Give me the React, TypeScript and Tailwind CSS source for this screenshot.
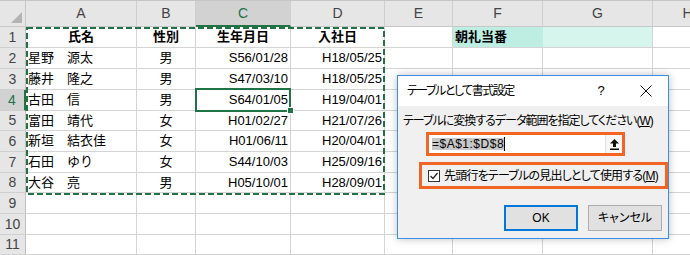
import clsx from "clsx";

const cols = [
  { label: "A", w: "w-[111px]" },
  { label: "B", w: "w-[59px]" },
  { label: "C", w: "w-[95px]" },
  { label: "D", w: "w-[94px]" },
  { label: "E", w: "w-[68px]" },
  { label: "F", w: "w-[90px]" },
  { label: "G", w: "w-[110px]" },
  { label: "H", w: "w-[70px]" },
];

const rowHeights = ["h-[21px]", "h-[21px]", "h-[21px]", "h-[21px]", "h-[20px]", "h-[21px]", "h-[21px]", "h-[20px]", "h-[21px]", "h-[21px]", "h-[20px]"];

const people = [
  ["星野　源太", "男", "S56/01/28", "H18/05/25"],
  ["藤井　隆之", "男", "S47/03/10", "H18/05/25"],
  ["古田　信", "男", "S64/01/05", "H19/04/01"],
  ["富田　靖代", "女", "H01/02/27", "H21/07/26"],
  ["新垣　結衣佳", "女", "H01/06/11", "H20/04/01"],
  ["石田　ゆり", "女", "S44/10/03", "H25/09/16"],
  ["大谷　亮", "男", "H05/10/01", "H28/09/01"],
];

type Cell = { text?: string; align?: string; bold?: boolean; fill?: string };

const rowCells = (r: number): Cell[] => {
  if (r === 1) {
    return [
      { text: "氏名", align: "justify-center", bold: true },
      { text: "性別", align: "justify-center", bold: true },
      { text: "生年月日", align: "justify-center", bold: true },
      { text: "入社日", align: "justify-center", bold: true },
      {},
      { text: "朝礼当番", bold: true, fill: "bg-[#bdeee1] border-r-[#bdeee1]" },
      { fill: "bg-[#d6f5ec]" },
      {},
    ];
  }
  const p = people[r - 2];
  if (!p) return cols.map(() => ({}));
  return [
    { text: p[0] },
    { text: p[1], align: "justify-center" },
    { text: p[2], align: "justify-end" },
    { text: p[3], align: "justify-end" },
    {},
    {},
    {},
    {},
  ];
};

const Sheet = () => (
  <div className="flex flex-col">
    <div className="flex h-[27px] border-t border-[#c6c6c6] bg-[#e6e6e6] text-[14px] text-[#444]">
      <div className="w-[26px] shrink-0 border-r border-b border-[#c8c8c8] flex items-end justify-end p-[3px]">
        <svg width="11" height="11" viewBox="0 0 11 11">
          <polygon points="11,0 11,11 0,11" fill="#b4b4b4" />
        </svg>
      </div>
      {cols.map((c) => (
        <div
          key={c.label}
          className={clsx(
            c.w,
            "shrink-0 flex items-center justify-center border-r border-[#cfcfcf]",
            c.label === "C" ? "bg-[#d2d2d2] text-[#217346] border-b-2 border-b-[#217346]" : "border-b border-b-[#c8c8c8]"
          )}
        >
          {c.label}
        </div>
      ))}
    </div>
    {rowHeights.map((h, i) => {
      const r = i + 1;
      const cells = rowCells(r);
      return (
        <div key={r} className={clsx("flex", h)}>
          <div
            className={clsx(
              "w-[26px] shrink-0 flex items-center justify-center border-b border-[#d0d0d0] text-[14px]",
              r === 4 ? "bg-[#d2d2d2] text-[#217346] border-r-2 border-r-[#217346]" : "bg-[#e6e6e6] text-[#444] border-r border-r-[#c0c0c0]"
            )}
          >
            {r}
          </div>
          {cols.map((c, j) => {
            const cell = cells[j];
            return (
              <div
                key={c.label}
                className={clsx(
                  c.w,
                  "shrink-0 flex items-center px-[2px] border-r border-b border-[#d4d4d4] text-[13px] text-black whitespace-nowrap",
                  cell.align,
                  cell.bold && "font-bold",
                  cell.fill
                )}
              >
                {cell.text}
              </div>
            );
          })}
        </div>
      );
    })}
  </div>
);

const FormatDialog = () => (
  <div className="absolute left-[397px] top-[75px] w-[272px] h-[164px] border border-[#3a8ee4] bg-[#f0f0f0] shadow-[0_0_8px_rgba(0,0,0,0.25)] flex flex-col text-[12px] text-black [font-feature-settings:'palt']">
    <div className="h-[30px] bg-white flex items-center pl-[9px] pr-[16px]">
      <span className="flex-1 tracking-[-1.5px]">テーブルとして書式設定</span>
      <span className="w-[8px] text-center text-[13px] mr-[35px]">?</span>
      <svg width="12" height="12" viewBox="0 0 12 12">
        <path d="M0.5 0.5 L11.5 11.5 M11.5 0.5 L0.5 11.5" stroke="#111" strokeWidth="1" />
      </svg>
    </div>
    <div className="flex flex-col pl-[5px] pt-[8px]">
      <div className="leading-[14px] whitespace-nowrap tracking-[-1px]">
        テーブルに変換するデータ範囲を指定してください(<span className="underline">W</span>)
      </div>
      <div className="ml-[23px] mt-[4px] w-[199px] h-[24px] border-[3px] border-[#f26522] flex bg-white">
        <div className="flex-1 flex items-center pl-[3px]">
          <span className="bg-[#c8c8c8] leading-[12px] h-[12px] flex items-center tracking-[0.5px]">=$A$1:$D$8</span>
          <span className="w-px h-[14px] bg-black" />
        </div>
        <div className="w-[17px] flex items-center justify-center bg-[#f7f7f7] border-l border-[#e2e2e2]">
          <svg width="9" height="11" viewBox="0 0 9 11">
            <path d="M4.5 0 L9 4.5 L6 4.5 L6 8 L3 8 L3 4.5 L0 4.5 Z" fill="#111" />
            <rect x="0" y="9.5" width="9" height="1.5" fill="#111" />
          </svg>
        </div>
      </div>
      <div className="ml-[16px] mt-[6px] w-[249px] h-[27px] border-[3px] border-[#f26522] flex items-center pl-[6px] gap-[4px] whitespace-nowrap">
        <div className="w-[12px] h-[12px] border border-[#333] bg-white flex items-center justify-center">
          <svg width="10" height="10" viewBox="0 0 10 10">
            <path d="M1.5 5 L4 7.5 L8.5 2" fill="none" stroke="#222" strokeWidth="1.2" />
          </svg>
        </div>
        <span className="tracking-[-0.8px]">
          先頭行をテーブルの見出しとして使用する(<span className="underline">M</span>)
        </span>
      </div>
      <div className="mt-[16px] flex justify-end gap-[10px] pr-[6px]">
        <button className="w-[74px] h-[26px] border-2 border-[#0078d7] bg-[#e1e1e1] flex items-center justify-center">OK</button>
        <button className="w-[74px] h-[26px] border border-[#adadad] bg-[#e1e1e1] flex items-center justify-center">キャンセル</button>
      </div>
    </div>
  </div>
);

export default function App() {
  return (
    <div className="relative w-[690px] h-[255px] overflow-hidden bg-white font-['Liberation_Sans','Noto_Sans_CJK_JP',sans-serif]">
      <Sheet />
      {/* copy range marching ants + active cell */}
      <svg className="absolute left-0 top-0 pointer-events-none" width="690" height="255">
        <rect x="27" y="28" width="357" height="166" fill="none" stroke="#217346" strokeWidth="2" strokeDasharray="6 3" />
        <rect x="196" y="89" width="94" height="22" fill="none" stroke="#217346" strokeWidth="2" />
        <rect x="287.5" y="107.5" width="6" height="6" fill="#217346" stroke="#fff" strokeWidth="1" />
      </svg>
      <FormatDialog />
    </div>
  );
}
